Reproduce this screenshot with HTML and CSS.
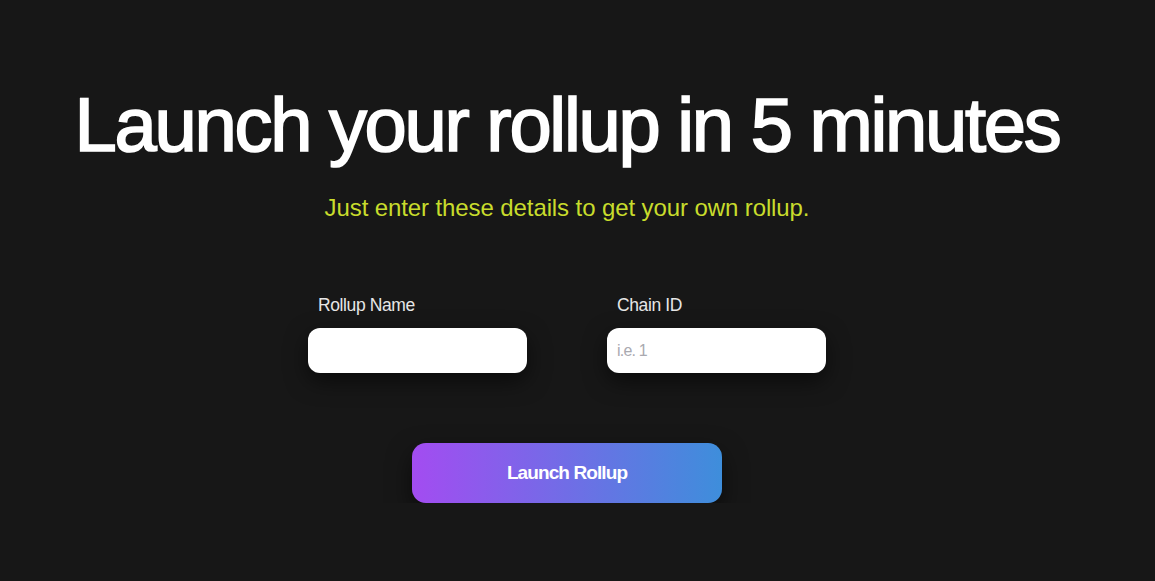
FILE: index.html
```html
<!DOCTYPE html>
<html lang="en">
<head>
    <meta charset="UTF-8">
    <meta name="viewport" content="width=device-width, initial-scale=1.0">
    <title>Launch your rollup</title>
    <link rel="stylesheet" href="styles.css">
</head>
<body>
    <div class="launch-page">
        <h1 class="launch-title">Launch your rollup in 5 minutes</h1>
        <p class="launch-subtitle">Just enter these details to get your own rollup.</p>

        <!-- Formulario -->
        <form class="launch-form">
            <div class="launch-fields">
                <div class="launch-field">
                    <label for="rollup-name">Rollup Name</label>
                    <input type="text" id="rollup-name">
                </div>
                <div class="launch-field">
                    <label for="chain-id">Chain ID</label>
                    <input type="text" id="chain-id" placeholder="i.e. 1">
                </div>
            </div>
            <button type="button" class="launch-button">Launch Rollup</button>
        </form>
    </div>
</body>
</html>
```

FILE: styles.css
```css
body {
    font-family: 'Liberation Sans', Arial, sans-serif;
    background: #171717;
    color: #fff;
    margin: 0;
    padding: 0;
}
.launch-page {
    display: flex;
    flex-direction: column;
    align-items: center;
    padding: 84px 21px 0 0;
}
.launch-title {
    font-size: 76px;
    font-weight: normal;
    letter-spacing: -2.3px;
    line-height: 82px;
    margin: 0;
    -webkit-text-stroke: 1.7px #fff;
}
.launch-subtitle {
    margin: 28px 0 0;
    font-size: 24px;
    letter-spacing: -0.1px;
    color: #c8dc2c;
}
.launch-form {
    display: flex;
    flex-direction: column;
    align-items: center;
    margin-top: 73px;
}
.launch-fields {
    display: flex;
    gap: 80px;
}
.launch-field {
    display: flex;
    flex-direction: column;
}
.launch-field label {
    font-size: 17.5px;
    letter-spacing: -0.4px;
    color: #e6e6e6;
    margin: 0 0 12px 10px;
}
.launch-field input {
    width: 219px;
    height: 45px;
    box-sizing: border-box;
    border: none;
    border-radius: 12px;
    background: #fff;
    padding: 0 10px;
    font-family: inherit;
    font-size: 16px;
    letter-spacing: -0.8px;
    color: #222;
    box-shadow: 0 8px 22px rgba(0, 0, 0, 0.55);
    outline: none;
}
.launch-field input::placeholder {
    color: #a9a9b0;
}
.launch-button {
    margin-top: 70px;
    width: 310px;
    height: 60px;
    border: none;
    border-radius: 14px;
    background: linear-gradient(90deg, #a34cf1, #3e8edb);
    color: #fff;
    font-family: inherit;
    font-size: 19px;
    font-weight: bold;
    letter-spacing: -0.9px;
    cursor: pointer;
    box-shadow: 0 10px 24px rgba(0, 0, 0, 0.55);
}
```
